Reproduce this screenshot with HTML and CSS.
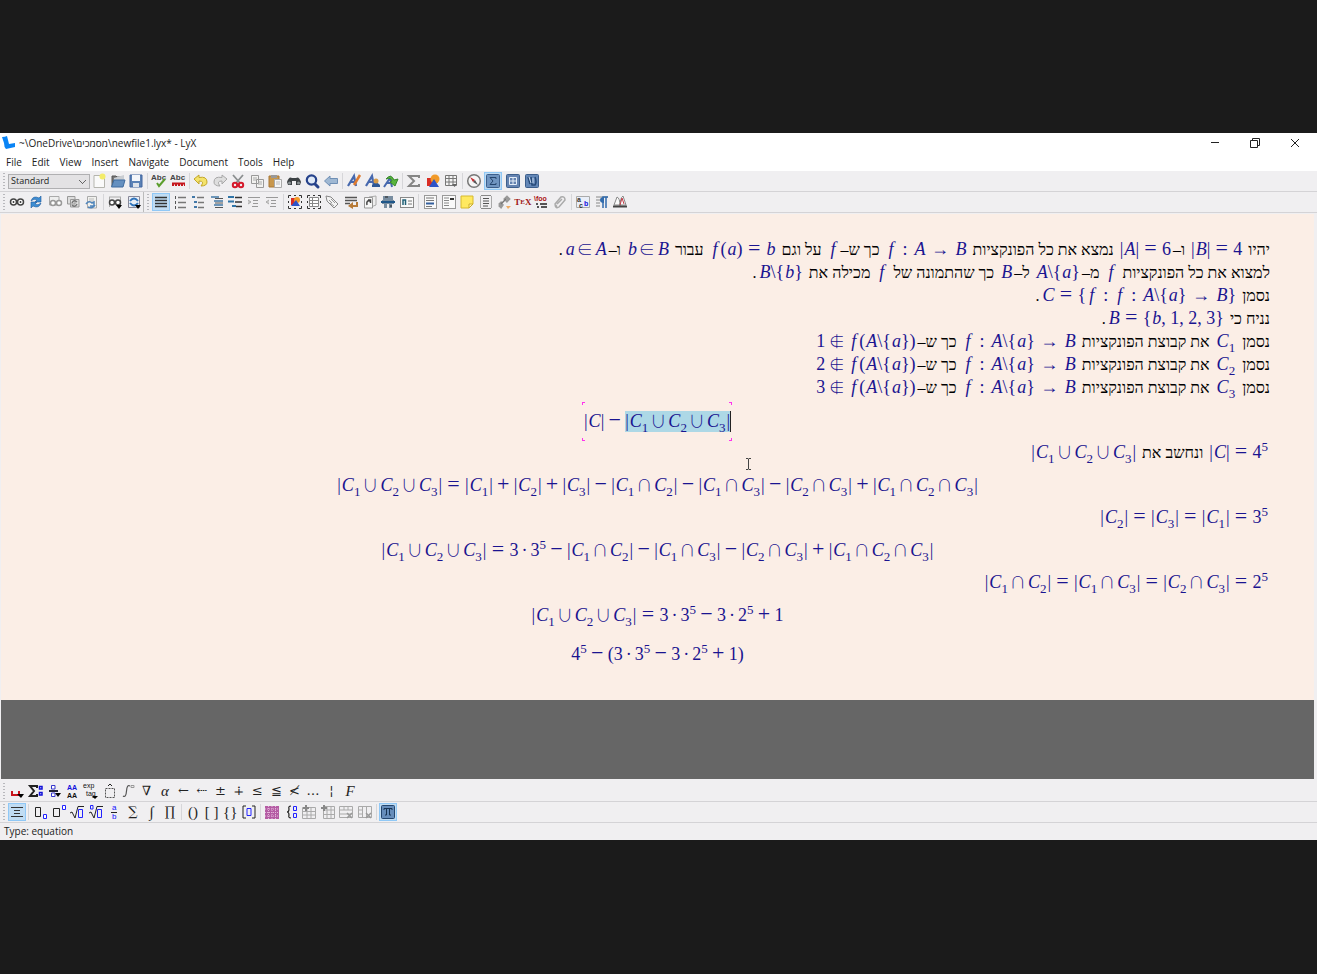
FILE: index.html
```html
<!DOCTYPE html>
<html lang="en">
<head>
<meta charset="utf-8">
<title>LyX</title>
<link rel="stylesheet" href="styles.css">
</head>
<body>
<div class="window">
<header class="titlebar">
<svg class="logo" width="14" height="14" viewBox="0 0 14 14"><path d="M0 1Q3 1 5 0L7 8L13 7V11L4 13Q2 11 2 7Z" fill="#0a84f5"/></svg>
<span class="caption">~\OneDrive\מסמכים\newfile1.lyx* - LyX</span>
<div class="controls">
<button aria-label="Minimize"><svg width="10" height="10" viewBox="0 0 10 10" class="thin"><path d="M1 4.500H9"/></svg></button>
<button aria-label="Restore"><svg width="10" height="10" viewBox="0 0 10 10" class="thin"><path d="M.5 2.500H7.500V9.500H.5ZM2.500 2.500V.5H9.500V7.500H7.500"/></svg></button>
<button aria-label="Close"><svg width="10" height="10" viewBox="0 0 10 10" class="thin"><path d="M1 1L9 9M9 1L1 9"/></svg></button>
</div>
</header>
<nav class="menu"><button>File</button><button>Edit</button><button>View</button><button>Insert</button><button>Navigate</button><button>Document</button><button>Tools</button><button>Help</button></nav>

<div class="bar">
<span class="handle"></span>
<select class="style-box" aria-label="Paragraph style"><option>Standard</option></select>
<div class="group n3">
<button aria-label="New"><svg viewBox="0 0 16 16"><path d="M3 2.500H13.500V14.500H3Z" fill="#fafafa" stroke="#b5b5ae"/><circle cx="11.500" cy="3.500" r="3" fill="#f3ec6a"/></svg></button>
<button aria-label="Open"><svg viewBox="0 0 16 16"><path d="M2 13V3H6L7 4H13V7" fill="#777" stroke="#555"/><path d="M4 5L14 2V8H4Z" fill="#c9cdd2"/><path d="M1.500 14L4 7H15L13 14Z" fill="#6590c0" stroke="#3e6b9f"/></svg></button>
<button aria-label="Save"><svg viewBox="0 0 16 16"><path d="M2 2H14V14H2Z" fill="#5b81b5" stroke="#4266a0"/><path d="M4 2H12V8H4Z" fill="#f4f6fa"/><path d="M5 10H11V14H5Z" fill="#dfe3ea"/></svg></button>
</div><i class="sep"></i>
<div class="group n2">
<button aria-label="Spellcheck"><svg viewBox="0 0 16 16"><text x="0" y="7" class="abc">Abc</text><path d="M6 10L8 13L14 6" fill="none" stroke="#5c9e2d" stroke-width="2"/></svg></button>
<button aria-label="Spellcheck continuously"><svg viewBox="0 0 16 16"><text x="0" y="7" class="abc">Abc</text><path d="M2 10.500H15" stroke="#c5161d" stroke-width="2"/><path d="M2 12H15" stroke="#c5161d" stroke-width="2" stroke-dasharray="2 1"/></svg></button>
</div><i class="sep"></i>
<div class="group n8">
<button aria-label="Undo"><svg viewBox="0 0 16 16"><path d="M1 6L6 2V4.500Q14 3 14 9Q14 13 8 13Q12 8 6 8V11Z" fill="#f4e36b" stroke="#c3a72a"/></svg></button>
<button aria-label="Redo"><svg viewBox="0 0 16 16"><path d="M15 6L10 2V4.500Q2 3 2 9Q2 13 8 13Q4 8 10 8V11Z" fill="#dedede" stroke="#a8a8a8"/></svg></button>
<button aria-label="Cut"><svg viewBox="0 0 16 16"><path d="M3 2L10 10M13 2L6 10" stroke="#8b8f90" stroke-width="1.800"/><circle cx="5" cy="12" r="2.200" fill="none" stroke="#d51a2c" stroke-width="2"/><circle cx="11" cy="12" r="2.200" fill="none" stroke="#d51a2c" stroke-width="2"/></svg></button>
<button aria-label="Copy"><svg viewBox="0 0 16 16"><path d="M2.500 2.500H9.500V10.500H2.500ZM7.500 6.500H14.500V14.500H7.500Z" fill="#f2f2f0" stroke="#999"/><path d="M4 5H8M4 7H7M9 9H13M9 11H13" stroke="#aaa"/></svg></button>
<button aria-label="Paste"><svg viewBox="0 0 16 16"><path d="M2 3H12V14H2Z" fill="#c8974c" stroke="#a87734"/><path d="M4 2H10V5H4Z" fill="#999"/><path d="M7.500 6.500H14.500V14.500H7.500Z" fill="#f6f6f6" stroke="#aaa"/><path d="M9 9H13M9 11H13" stroke="#bbb"/></svg></button>
<button aria-label="Find and replace"><svg viewBox="0 0 16 16"><path d="M1 9Q3 3 6 5H10Q13 3 15 9L14 12H10V8H6V12H2Z" fill="#3c4144"/><circle cx="3.500" cy="10" r="1.500" fill="#8d9496"/><circle cx="12.500" cy="10" r="1.500" fill="#8d9496"/></svg></button>
<button aria-label="Advanced find"><svg viewBox="0 0 16 16"><path d="M11 11L14 14" stroke="#26428b" stroke-width="3" stroke-linecap="round"/><circle cx="7.500" cy="7" r="4.700" fill="#dfe9f7" stroke="#26428b" stroke-width="2.200"/></svg></button>
<button aria-label="Navigate back"><svg viewBox="0 0 16 16"><path d="M1.500 8L7 3V5.500H14.500V10.500H7V13Z" fill="#9fb8d3" stroke="#6f8fb5"/></svg></button>
</div><i class="sep"></i>
<div class="group n3">
<button aria-label="Emphasis"><svg viewBox="0 0 16 16"><path d="M2 13L8 3L10 13M5 9H10" stroke="#4668ae" stroke-width="2.200" fill="none"/><path d="M8 12L14 2" stroke="#df7b2f" stroke-width="2.500"/></svg></button>
<button aria-label="Noun"><svg viewBox="0 0 16 16"><path d="M1 13L7 3L9 13M4 9H9" stroke="#4668ae" stroke-width="2.200" fill="none"/><path d="M7 14V12Q11 7 15 12V14Z" fill="#2d5896"/><circle cx="11" cy="8" r="2.500" fill="#d79b47"/></svg></button>
<button aria-label="Apply last"><svg viewBox="0 0 16 16"><path d="M1 14L7 5L9 14M4 10H9" stroke="#4668ae" stroke-width="2" fill="none"/><path d="M3 6Q8 0 11 7L15 6L12 13L7 9L9 8Q8 4 3 6Z" fill="#59b63d" stroke="#37872a"/></svg></button>
</div><i class="sep"></i>
<div class="group n3">
<button aria-label="Insert math"><svg viewBox="0 0 16 16"><path d="M13 5V3H3L8 8L3 13H13V11" fill="none" stroke="#858585" stroke-width="2"/></svg></button>
<button aria-label="Insert graphics"><svg viewBox="0 0 16 16"><path d="M2 5H9V13H2Z" fill="#d92c24"/><circle cx="10" cy="6" r="4.500" fill="#f19a28"/><path d="M4 14L9 6L14 14Z" fill="#2e54c7"/></svg></button>
<button aria-label="Insert table"><svg viewBox="0 0 16 16"><path d="M2.500 2.500H13.500V12.500H2.500ZM2 5.500H14M2 9H14M6 3V12M10 3V12" fill="#f4f4f4" stroke="#777"/><path d="M9 11H14L11.500 14Z" fill="#666"/></svg></button>
</div><i class="sep"></i>
<div class="group n4">
<button aria-label="Outline"><svg viewBox="0 0 16 16"><circle cx="8" cy="8" r="6.300" fill="#f5f5f5" stroke="#777" stroke-width="1.500"/><path d="M4 4L9 7L7 9Z" fill="#c42c30"/><path d="M12 12L7 9L9 7Z" fill="#555"/></svg></button>
<button class="on" aria-label="Math toolbar"><svg viewBox="0 0 16 16"><rect x="1.500" y="1.500" width="13" height="13" rx="1" fill="#6f94c0" stroke="#3d5f8c"/><path d="M11 6V4.500H5L8 8L5 11.500H11V10" fill="none" stroke="#24446d"/></svg></button>
<button aria-label="Table toolbar"><svg viewBox="0 0 16 16"><rect x="1.500" y="1.500" width="13" height="13" rx="1" fill="#6482b0" stroke="#3d5f8c"/><path d="M4.500 4.500H11.500V11.500H4.500ZM4 8H12M8 4V12" fill="none" stroke="#e4edf7"/></svg></button>
<button aria-label="Review toolbar"><svg viewBox="0 0 16 16"><rect x="1.500" y="1.500" width="13" height="13" rx="1" fill="#6487b6" stroke="#3d5f8c"/><path d="M4 4L6 11M7 4L8 12H11Q13 9 11 4" fill="none" stroke="#274a78" stroke-width="1.500"/><path d="M5 4L7 10M9 5V10" stroke="#c5d6ea"/></svg></button>
</div>
</div>

<div class="bar">
<span class="handle"></span>
<div class="group n5">
<button aria-label="View"><svg viewBox="0 0 16 16"><g class="specs"><circle cx="4.500" cy="8" r="3"/><circle cx="11.500" cy="8" r="3"/><path d="M4.500 7V9M11.500 7V9"/></g></svg></button>
<button aria-label="Update"><svg viewBox="0 0 16 16"><path d="M3 7Q5 1 11 4L13 2V8H7L9 6Q6 4 3 7ZM13 9Q11 15 5 12L3 14V8H9L7 10Q10 12 13 9Z" fill="#3d8ed3" stroke="#215d9e" stroke-width=".6"/></svg></button>
<button aria-label="View master"><svg viewBox="0 0 16 16"><path d="M2.500 2.500H12V11H2.500Z" fill="#eee" stroke="#aaa"/><g class="specs pale"><circle cx="6" cy="9" r="2.500"/><circle cx="12" cy="9" r="2.500"/></g></svg></button>
<button aria-label="Update master"><svg viewBox="0 0 16 16"><path d="M2.500 2.500H10V10H2.500ZM5.500 5.500H14V13H5.500Z" fill="#ddd" stroke="#999"/><path d="M7 9Q9 5 12 8M12 10Q10 14 7 11" stroke="#777" stroke-width="1.500" fill="none"/></svg></button>
<button aria-label="Synchronize"><svg viewBox="0 0 16 16"><path d="M3.500 2.500H12.500V14H3.500Z" fill="#f1f1ee" stroke="#aaa"/><path d="M5 5H10M5 7H10" stroke="#bbb"/><path d="M2 10Q5 6 8 9L10 8V12H6M11 11Q9 15 4 13" stroke="#4f84bb" stroke-width="1.500" fill="none"/></svg></button>
</div><i class="sep"></i>
<div class="group n2">
<button aria-label="View other formats"><svg viewBox="0 0 16 16"><path d="M2.500 3V13M13.500 3V13M2 3H14" stroke="#aaa"/><g class="specs"><circle cx="5" cy="8.500" r="2.500"/><circle cx="11" cy="8.500" r="2.500"/></g><path d="M9 11H15L12 15Z"/></svg></button>
<button aria-label="Update other formats"><svg viewBox="0 0 16 16"><path d="M2.500 2.500H13.500V13.500H2.500Z" fill="#e8eef6" stroke="#889"/><path d="M4 7Q8 2 12 7M12 9Q8 14 4 9" stroke="#2f73bb" stroke-width="2" fill="none"/><path d="M9 11H15L12 15Z"/></svg></button>
</div>
<span class="bar-end"></span><span class="handle"></span>
<div class="group n7">
<button class="on" aria-label="Default"><svg viewBox="0 0 16 16"><path d="M2 3.500H14M2 6.500H14M2 9.500H14M2 12.500H14" stroke="#333" stroke-width="1.500"/></svg></button>
<button aria-label="Numbered list"><svg viewBox="0 0 16 16"><path d="M3.500 2V5M3.500 7V10M3.500 12V15" stroke="#555"/><path d="M6 3.500H14M6 8.500H14M6 13.500H14" stroke="#777" stroke-width="1.500"/></svg></button>
<button aria-label="Itemized list"><svg viewBox="0 0 16 16"><path d="M2 3H5M4 8H7M4 13H7" stroke="#4278a8" stroke-width="2"/><path d="M7 3.500H14M8 8.500H14M8 13.500H14" stroke="#777" stroke-width="1.500"/></svg></button>
<button aria-label="List"><svg viewBox="0 0 16 16"><path d="M2 3H10M5 7H14M5 11H14" stroke="#417aa6" stroke-width="1.500"/><path d="M6 4.500H14M6 9H14M6 13.500H14" stroke="#555"/></svg></button>
<button aria-label="Description"><svg viewBox="0 0 16 16"><path d="M1 3H7M1 7.500H7M5 12H9" stroke="#2f74a7" stroke-width="2"/><path d="M8 3.500H15M8 8H15M9 12.500H15" stroke="#333" stroke-width="1.500"/></svg></button>
<button aria-label="Increase depth"><svg viewBox="0 0 16 16"><path d="M2 3.500H14M7 6.500H12M7 9.500H12M6 12.500H12" stroke="#999"/><path d="M2 6L5 8L2 10" fill="#ccc" stroke="#aaa"/></svg></button>
<button aria-label="Decrease depth"><svg viewBox="0 0 16 16"><path d="M2 3.500H14M7 6.500H12M7 9.500H12M6 12.500H12" stroke="#999"/><path d="M5 6L2 8L5 10" fill="#ccc" stroke="#aaa"/></svg></button>
</div><i class="sep"></i>
<div class="group n7 wide">
<button aria-label="Float figure"><svg viewBox="0 0 16 16"><path d="M1.500 4V1.500H4M12 1.500H14.500V4M14.500 12V14.500H12M4 14.500H1.500V12M7 1.500H9M7 14.500H9M1.500 7V9M14.500 7V9" fill="none" stroke="#333"/><path d="M4 4H9V11H4Z" fill="#d92c24"/><circle cx="10" cy="6" r="3" fill="#f19a28"/><path d="M4 12L9 6L13 12Z" fill="#2e54c7"/></svg></button>
<button aria-label="Float table"><svg viewBox="0 0 16 16"><path d="M1.500 4V1.500H4M12 1.500H14.500V4M14.500 12V14.500H12M4 14.500H1.500V12M7 1.500H9M7 14.500H9M1.500 7V9M14.500 7V9" fill="none" stroke="#333"/><path d="M3.500 3.500H12.500V12.500H3.500ZM3 6.500H13M3 9.500H13M6.500 3V13" fill="#fff" stroke="#888"/></svg></button>
<button aria-label="Label"><svg viewBox="0 0 16 16"><path d="M2 2L7 3L14 10L10 14L3 7Z" fill="#f3f3f3" stroke="#888"/><path d="M5 6L8 9M7 5L11 9M6 9L10 12" stroke="#999"/></svg></button>
<button aria-label="Cross-reference"><svg viewBox="0 0 16 16"><path d="M2 3.500H14M2 6.500H14M2 9.500H7" stroke="#555" stroke-width="1.500"/><path d="M14 8V12H9" fill="none" stroke="#b87b38" stroke-width="2"/><path d="M10 8V15L5 12Z" fill="#b87b38"/></svg></button>
<button aria-label="Citation"><svg viewBox="0 0 16 16"><path d="M7 3L14 2V11L9 13" fill="#eee" stroke="#aaa"/><path d="M2.500 3.500H10.500V14H2.500Z" fill="#f7f7f7" stroke="#999"/><path d="M5 11Q4 6 8 7M6 6H8.500V9" fill="none" stroke="#444" stroke-width="1.500"/></svg></button>
<button aria-label="Index"><svg viewBox="0 0 16 16"><path d="M3 2H13V6H3ZM2 6H14V10H2ZM4 10H7V14H4ZM9 10H12V14H9Z" fill="#788da0"/><path d="M1 8H15" stroke="#1f5689" stroke-width="2"/><path d="M5 3H8M10 12H12" stroke="#222"/></svg></button>
<button aria-label="Nomenclature"><svg viewBox="0 0 16 16"><rect x="1.500" y="3.500" width="13" height="10" fill="#f9f9f9" stroke="#888"/><path d="M4 11V6H6.500V11" fill="none" stroke="#206077" stroke-width="1.500"/><path d="M9 7H13M9 10H13" stroke="#777"/></svg></button>
</div><i class="sep"></i>
<div class="group n8">
<button aria-label="Footnote"><svg viewBox="0 0 16 16"><rect x="2.500" y="1.500" width="12" height="13" fill="#f9f9f9" stroke="#999"/><path d="M4 4H12M4 6.500H12M4 12.500H10" stroke="#777"/><path d="M4 9.500H12" stroke="#335f9e" stroke-width="2"/></svg></button>
<button aria-label="Margin note"><svg viewBox="0 0 16 16"><rect x="1.500" y="1.500" width="13" height="13" fill="#f9f9f9" stroke="#999"/><path d="M3 4H8M3 6.500H8M3 9H8M3 11.500H8" stroke="#888"/><path d="M9 5H13" stroke="#333" stroke-width="2"/></svg></button>
<button aria-label="Note"><svg viewBox="0 0 16 16"><path d="M2 2H14V10L10 14H2Z" fill="#ffe960" stroke="#d6b92f"/><path d="M14 10H10V14Z" fill="#fff7b5" stroke="#ccad2a"/></svg></button>
<button aria-label="Box"><svg viewBox="0 0 16 16"><path d="M3 1.500H13M3 14.500H13" stroke="#888"/><path d="M2.500 2V14M13.500 2V14" stroke="#aaa"/><path d="M5 4.500H11M5 7H11M5 9.500H11M5 12H10" stroke="#555"/></svg></button>
<button aria-label="Hyperlink"><svg viewBox="0 0 16 16"><path d="M3 11L6 8M8 6L11 3L13 5L10 8M7 10L5 13L3 11" stroke="#999" stroke-width="2.500" fill="none"/><path d="M5 10L10 5" stroke="#777" stroke-width="1.500"/><path d="M10 12H15L12 15Z" fill="#f0ad65"/></svg></button>
<button class="tex" aria-label="TeX code">T<sub>E</sub>X</button>
<button aria-label="Math macro"><svg viewBox="0 0 16 16"><text x="1" y="7" class="foo">\foo</text><path d="M3 10H5M7 10H14M4 13H6M8 13H14" stroke="#222" stroke-width="1.500"/></svg></button>
<button aria-label="Include file"><svg viewBox="0 0 16 16"><path d="M5 13L3 10L9 3Q13 2 13 6L7 13Q4 15 3 11M5 10L10 5" fill="none" stroke="#aaa" stroke-width="1.500"/></svg></button>
</div><i class="sep"></i>
<div class="group n3">
<button aria-label="Text style"><svg viewBox="0 0 16 16"><path d="M1.500 2.500H14.500V13.500H1.500Z" fill="#e9eef8" stroke="#aaa"/><text x="2" y="8" class="small-a">a</text><text x="4" y="14" class="small-a">c</text><text x="9" y="12" class="small-a blue">b</text></svg></button>
<button aria-label="Paragraph settings"><svg viewBox="0 0 16 16"><path d="M2 3H14M2 6H6M2 9H6M2 12H6" stroke="#888"/><path d="M9 14V3H14M12 3V14" stroke="#316bad" stroke-width="1.500" fill="none"/><path d="M10 3Q6 3 6 6Q6 9 10 9Z" fill="#316bad"/></svg></button>
<button aria-label="Thesaurus"><svg viewBox="0 0 16 16"><path d="M2 11L5 3Q8 4 8 12Q8 4 11 2L14 11Z" fill="#fafafa" stroke="#888"/><path d="M1 12.500H15" stroke="#444" stroke-width="2"/><path d="M8 11L10 4L12 10" stroke="#c33d49" fill="none"/></svg></button>
</div>
</div>

<main class="editor">
<article class="doc" dir="rtl" lang="he">
<p>יהיו <bdi dir="ltr">|<i>B</i>|<b class="rel">=</b>4</bdi> ו–<bdi dir="ltr">|<i>A</i>|<b class="rel">=</b>6</bdi> נמצא את כל הפונקציות <bdi dir="ltr"><i class="f">f</i><b class="col">:</b><i>A</i><b class="arr">→</b><i>B</i></bdi> כך ש–<bdi dir="ltr"><i class="f">f</i></bdi> על וגם <bdi dir="ltr"><i class="f">f</i>(<i>a</i>)<b class="rel">=</b><i>b</i></bdi> עבור <bdi dir="ltr"><i>b</i><b class="el">∈</b><i>B</i></bdi> ו–<bdi dir="ltr"><i>a</i><b class="el">∈</b><i>A</i></bdi>.</p>
<p>למצוא את כל הפונקציות <bdi dir="ltr"><i class="f">f</i></bdi> מ–<bdi dir="ltr"><i>A</i>\{<i>a</i>}</bdi> ל–<bdi dir="ltr"><i>B</i></bdi> כך שהתמונה של <bdi dir="ltr"><i class="f">f</i></bdi> מכילה את <bdi dir="ltr"><i>B</i>\{<i>b</i>}</bdi>.</p>
<p>נסמן <bdi dir="ltr"><i>C</i><b class="rel">=</b>{<i class="f">f</i><b class="col">:</b><i class="f">f</i><b class="col">:</b><i>A</i>\{<i>a</i>}<b class="arr">→</b><i>B</i>}</bdi>.</p>
<p>נניח כי <bdi dir="ltr"><i>B</i><b class="rel">=</b>{<i>b</i>, 1, 2, 3}</bdi>.</p>
<p>נסמן <bdi dir="ltr"><i>C</i><sub>1</sub></bdi> את קבוצת הפונקציות <bdi dir="ltr"><i class="f">f</i><b class="col">:</b><i>A</i>\{<i>a</i>}<b class="arr">→</b><i>B</i></bdi> כך ש–<bdi dir="ltr">1<b class="el out">∉</b><i class="f">f</i>(<i>A</i>\{<i>a</i>})</bdi></p>
<p>נסמן <bdi dir="ltr"><i>C</i><sub>2</sub></bdi> את קבוצת הפונקציות <bdi dir="ltr"><i class="f">f</i><b class="col">:</b><i>A</i>\{<i>a</i>}<b class="arr">→</b><i>B</i></bdi> כך ש–<bdi dir="ltr">2<b class="el out">∉</b><i class="f">f</i>(<i>A</i>\{<i>a</i>})</bdi></p>
<p>נסמן <bdi dir="ltr"><i>C</i><sub>3</sub></bdi> את קבוצת הפונקציות <bdi dir="ltr"><i class="f">f</i><b class="col">:</b><i>A</i>\{<i>a</i>}<b class="arr">→</b><i>B</i></bdi> כך ש–<bdi dir="ltr">3<b class="el out">∉</b><i class="f">f</i>(<i>A</i>\{<i>a</i>})</bdi></p>
<div class="display" dir="ltr"><div class="active"><span>|<i>C</i>|<b class="bin">−</b></span><span class="selected">|<i>C</i><sub>1</sub><b class="cup">∪</b><i>C</i><sub>2</sub><b class="cup">∪</b><i>C</i><sub>3</sub>|</span><u class="c1"></u><u class="c2"></u><u class="c3"></u><u class="c4"></u>
<svg class="ibeam" width="7" height="12" viewBox="0 0 7 12"><path d="M1 .5H3L3.500 1L4 .5H6M3.500 1V11M1 11.500H3L3.500 11L4 11.500H6" fill="none" stroke="#444"/></svg></div></div>
<p><bdi dir="ltr">|<i>C</i>|<b class="rel">=</b>4<sup>5</sup></bdi> ונחשב את <bdi dir="ltr">|<i>C</i><sub>1</sub><b class="cup">∪</b><i>C</i><sub>2</sub><b class="cup">∪</b><i>C</i><sub>3</sub>|</bdi></p>
<div class="display" dir="ltr">|<i>C</i><sub>1</sub><b class="cup">∪</b><i>C</i><sub>2</sub><b class="cup">∪</b><i>C</i><sub>3</sub>|<b class="rel">=</b>|<i>C</i><sub>1</sub>|<b class="bin">+</b>|<i>C</i><sub>2</sub>|<b class="bin">+</b>|<i>C</i><sub>3</sub>|<b class="bin">−</b>|<i>C</i><sub>1</sub><b class="cup">∩</b><i>C</i><sub>2</sub>|<b class="bin">−</b>|<i>C</i><sub>1</sub><b class="cup">∩</b><i>C</i><sub>3</sub>|<b class="bin">−</b>|<i>C</i><sub>2</sub><b class="cup">∩</b><i>C</i><sub>3</sub>|<b class="bin">+</b>|<i>C</i><sub>1</sub><b class="cup">∩</b><i>C</i><sub>2</sub><b class="cup">∩</b><i>C</i><sub>3</sub>|</div>
<p><bdi dir="ltr">|<i>C</i><sub>2</sub>|<b class="rel">=</b>|<i>C</i><sub>3</sub>|<b class="rel">=</b>|<i>C</i><sub>1</sub>|<b class="rel">=</b>3<sup>5</sup></bdi></p>
<div class="display" dir="ltr">|<i>C</i><sub>1</sub><b class="cup">∪</b><i>C</i><sub>2</sub><b class="cup">∪</b><i>C</i><sub>3</sub>|<b class="rel">=</b>3<b class="dot">·</b>3<sup>5</sup><b class="bin">−</b>|<i>C</i><sub>1</sub><b class="cup">∩</b><i>C</i><sub>2</sub>|<b class="bin">−</b>|<i>C</i><sub>1</sub><b class="cup">∩</b><i>C</i><sub>3</sub>|<b class="bin">−</b>|<i>C</i><sub>2</sub><b class="cup">∩</b><i>C</i><sub>3</sub>|<b class="bin">+</b>|<i>C</i><sub>1</sub><b class="cup">∩</b><i>C</i><sub>2</sub><b class="cup">∩</b><i>C</i><sub>3</sub>|</div>
<p><bdi dir="ltr">|<i>C</i><sub>1</sub><b class="cup">∩</b><i>C</i><sub>2</sub>|<b class="rel">=</b>|<i>C</i><sub>1</sub><b class="cup">∩</b><i>C</i><sub>3</sub>|<b class="rel">=</b>|<i>C</i><sub>2</sub><b class="cup">∩</b><i>C</i><sub>3</sub>|<b class="rel">=</b>2<sup>5</sup></bdi></p>
<div class="display" dir="ltr">|<i>C</i><sub>1</sub><b class="cup">∪</b><i>C</i><sub>2</sub><b class="cup">∪</b><i>C</i><sub>3</sub>|<b class="rel">=</b>3<b class="dot">·</b>3<sup>5</sup><b class="bin">−</b>3<b class="dot">·</b>2<sup>5</sup><b class="bin">+</b>1</div>
<div class="display last" dir="ltr">4<sup>5</sup><b class="bin">−</b>(3<b class="dot">·</b>3<sup>5</sup><b class="bin">−</b>3<b class="dot">·</b>2<sup>5</sup><b class="bin">+</b>1)</div>
</article>
<div class="below"></div>
</main>

<div class="bar">
<span class="handle"></span>
<div class="group n19">
<button aria-label="Spacing"><svg viewBox="0 0 16 16"><path d="M3 8V12H10V8" fill="none" stroke="#c8141c" stroke-width="2"/><path d="M8 11H15L12 15Z"/></svg></button>
<button aria-label="Operators"><svg viewBox="0 0 16 16"><path d="M9 5V3H2L6 8L2 13H9V11" fill="none" stroke="#222" stroke-width="2"/><path d="M11.500 3.500H14V6H11.500ZM11.500 9.500H14V12H11.500Z" fill="#fff" stroke="#1111d8" stroke-width="1.500"/></svg></button>
<button aria-label="Fractions"><svg viewBox="0 0 16 16"><path d="M5.500 2.500H9V6H5.500ZM5.500 10H9V13.500H5.500Z" fill="#fff" stroke="#3535cc"/><path d="M3 8H12" stroke="#223" stroke-width="2"/><path d="M9 10H15L12 14Z"/></svg></button>
<button aria-label="Fonts"><svg viewBox="0 0 16 16"><text x="2" y="7" class="aa blue">AA</text><text x="2" y="15" class="aa">AA</text></svg></button>
<button aria-label="Functions"><svg viewBox="0 0 16 16"><text x="0" y="5" class="exp">exp</text><text x="3" y="13" class="exp">tag</text><path d="M9 13H15L12 16Z"/></svg></button>
<button aria-label="Frame decorations"><svg viewBox="0 0 16 16"><path d="M3.500 5.500H12.500V14.500H3.500Z" fill="none" stroke="#555" stroke-dasharray="2 1"/><path d="M6 3L8 1L10 3" fill="none" stroke="#222"/></svg></button>
<button aria-label="Big operators"><svg viewBox="0 0 16 16"><path d="M3 13Q6 15 6.500 8Q7 1 10 3" fill="none" stroke="#555" stroke-width="1.200"/><path d="M11 2.500H14V4.500H11Z" fill="none" stroke="#999"/></svg></button>
<button class="glyph">∇</button><button class="glyph it">α</button><button class="glyph">←</button><button class="glyph">⇠</button><button class="glyph">±</button><button class="glyph">∔</button><button class="glyph">≤</button><button class="glyph">≦</button><button class="glyph">≮</button><button class="glyph">…</button><button class="glyph">¦</button><button class="glyph it">F</button>
</div>
</div>
<div class="bar">
<span class="handle"></span>
<div class="group"><button class="on" aria-label="Display formula"><svg viewBox="0 0 16 16"><path d="M2 3.500H14M5 6.500H11M5 9.500H11M2 12.500H14" stroke="#333"/></svg></button></div><i class="sep"></i>
<div class="group n8">
<button aria-label="Subscript"><svg viewBox="0 0 16 16"><path d="M3.500 3.500H8.500V12.500H3.500Z" fill="none" stroke="#222"/><path d="M11.500 10.500H14.500V14.500H11.500Z" fill="#fff" stroke="#22f"/></svg></button>
<button aria-label="Superscript"><svg viewBox="0 0 16 16"><path d="M2.500 4.500H8.500V12.500H2.500Z" fill="none" stroke="#222"/><path d="M11.500 1.500H14.500V5.500H11.500Z" fill="#fff" stroke="#22f"/></svg></button>
<button aria-label="Square root"><svg viewBox="0 0 16 16"><path d="M1 9L3 8L6 14L9 2.500H15" fill="none" stroke="#222"/><path d="M9.500 5.500H13.500V13.500H9.500Z" fill="none" stroke="#22f"/></svg></button>
<button aria-label="Root"><svg viewBox="0 0 16 16"><path d="M1 9L3 8L6 14L9 2.500H15" fill="none" stroke="#222"/><path d="M9.500 5.500H13.500V13.500H9.500ZM2.500 1.500H5V5H2.500Z" fill="none" stroke="#22f"/></svg></button>
<button aria-label="Fraction"><svg viewBox="0 0 16 16"><text x="6" y="6" class="frac">a</text><path d="M5 8.500H11" stroke="#222"/><text x="6" y="15" class="frac">b</text></svg></button>
<button class="glyph">∑</button><button class="glyph it">∫</button><button class="glyph">∏</button>
</div><i class="sep"></i>
<div class="group n4 tight">
<button class="glyph big">()</button><button class="glyph big">[ ]</button><button class="glyph big">{}</button>
<button aria-label="Delimiters"><svg viewBox="0 0 16 16"><path d="M5 2H2V14H5M11 2H14V14H11" fill="none" stroke="#222"/><path d="M6 4.500H10V11.500H6Z" fill="none" stroke="#22f"/></svg></button>
</div><i class="sep"></i>
<div class="group n6">
<button aria-label="Matrix"><svg viewBox="0 0 16 16"><path d="M1 2H15V15H1Z" fill="#b45ca4"/><path d="M1 5H15M1 8.500H15M1 12H15M4.500 2V15M8 2V15M11.500 2V15" stroke="#e3b5da" stroke-dasharray="1 1"/></svg></button>
<button aria-label="Cases"><svg viewBox="0 0 16 16"><path d="M8 2Q5 2 6 5Q6 8 4 8Q6 8 6 11Q5 14 8 14" fill="none" stroke="#222" stroke-width="1.200"/><path d="M10.500 2.500H13.500V6.500H10.500ZM10.500 9.500H13.500V13.500H10.500Z" fill="none" stroke="#22f"/></svg></button>
<button aria-label="Add row"><svg viewBox="0 0 16 16"><path class="grid" d="M1.500 3.500H14.500V14.500H1.500ZM1 7.500H15M1 11H15M6 3V15M10 3V15"/><path d="M5 1V7M2 4H8" stroke="#888" stroke-width="2"/></svg></button>
<button aria-label="Add column"><svg viewBox="0 0 16 16"><path class="grid" d="M3.500 2.500H14.500V14.500H3.500ZM3 6H15M3 10.500H15M7 2V15M11 2V15"/><path d="M4 1V7M1 4H7" stroke="#888" stroke-width="2"/></svg></button>
<button aria-label="Delete row"><svg viewBox="0 0 16 16"><path class="grid" d="M1.500 2.500H14.500V13.500H1.500ZM1 6H15M1 10H15M6 2V6M10 2V6"/><path d="M9 9L14 14M14 9L9 14" stroke="#999" stroke-width="1.500"/></svg></button>
<button aria-label="Delete column"><svg viewBox="0 0 16 16"><path class="grid" d="M1.500 2.500H14.500V13.500H1.500ZM1 6H5M1 10H5M5.500 2V14M9.500 2V14"/><path d="M9 9L14 14M14 9L9 14" stroke="#999" stroke-width="1.500"/></svg></button>
</div><i class="sep"></i>
<div class="group"><button class="on" aria-label="Math panels"><svg viewBox="0 0 16 16"><rect x="1.500" y="1.500" width="13" height="13" rx="1" fill="#668dbb" stroke="#24456e"/><path d="M4 6V4.500H12V6M6.500 5V11H5M9.500 5V11H11" fill="none" stroke="#173454"/></svg></button></div>
</div>
<footer class="status">Type: equation</footer>
</div>
</body>
</html>
```
FILE: styles.css
```css
* { box-sizing: border-box; }
body {
  margin: 0;
  min-height: 100vh;
  padding: 133px 0 134px;
  display: flex;
  flex-direction: column;
  background: #1b1b1b;
  font-family: "Open Sans", "Liberation Sans", sans-serif;
  font-size: 10px;
  color: #222;
}
button { border: 0; padding: 0; margin: 0; background: none; font: inherit; color: inherit; }
.window { flex: 1; display: flex; flex-direction: column; background: #f0eff1; }

.titlebar { display: flex; align-items: center; height: 20px; padding-left: 2px; gap: 3px; background: #fff; }
.caption { white-space: nowrap; }
.controls { display: flex; margin-left: auto; padding-right: 2px; }
.controls button { width: 40px; height: 20px; display: flex; align-items: center; justify-content: center; }
.thin { fill: none; stroke: #222; stroke-width: 1; }

.menu { display: flex; gap: 10px; height: 18px; padding: 0 6px; align-items: center; background: #fff; }

.bar { display: flex; align-items: center; height: 21px; border-bottom: 1px solid #d4d3d6; }
.handle { width: 2px; height: 16px; margin: 0 3px; background: repeating-linear-gradient(#b8b8bc 0 1px, transparent 1px 3px); }
.style-box {
  width: 82px; height: 15px; padding: 0 2px; margin: 0;
  appearance: none; border: 1px solid #b0b0b2; border-radius: 0;
  background: #e3e2e4 no-repeat;
  background-image: linear-gradient(45deg, transparent 44%, #666 44% 58%, transparent 58%), linear-gradient(-45deg, transparent 44%, #666 44% 58%, transparent 58%);
  background-size: 4px 4px;
  background-position: 70px 5px, 73px 5px;
  font: 9px/12px "Open Sans", sans-serif; color: #222;
}
.group { display: flex; justify-content: space-between; }
.group button { width: 18px; height: 18px; display: flex; align-items: center; justify-content: center; flex: none; }
.group svg { width: 16px; height: 16px; display: block; overflow: visible; }
.group .on { background: #c0dcf3; outline: 1px solid #90c8f6; outline-offset: -1px; }
.n2 { width: 37px; }
.n3 { width: 55px; }
.n4 { width: 76px; }
.n4.tight { width: 74px; }
.n5 { width: 93px; }
.n6 { width: 111px; }
.n7 { width: 129px; }
.n7.wide { width: 130px; }
.n8 { width: 148px; }
.n19 { width: 351px; }
.sep { width: 1px; height: 16px; margin: 0 2px; background: #d6d6d9; }
.bar-end { width: 1px; height: 20px; background: #bbb; }
.abc { font: bold 8px "Liberation Sans", sans-serif; fill: #444; }
.foo { font: bold 7px "Liberation Sans", sans-serif; fill: #a11; }
.small-a { font: bold 7px "Liberation Sans", sans-serif; fill: #333; }
.aa { font: bold 7px "Liberation Sans", sans-serif; fill: #111; }
.exp { font: 7px "Liberation Sans", sans-serif; fill: #111; }
.frac { font: 8px "Liberation Sans", sans-serif; fill: #11f; }
.group .blue { fill: #11d; }
.specs { fill: #fff; stroke: #444; stroke-width: 1.500; }
.specs.pale { stroke: #999; }
.grid { fill: none; stroke: #aaa; }
.group .tex { font: bold 9px "Liberation Serif", serif; color: #a01818; }
.tex sub { font-size: 7px; }
.group .glyph { font: 13px/18px "DejaVu Serif", serif; overflow: hidden; }
.group .it { font-family: "Liberation Serif", serif; font-style: italic; font-size: 15px; }
.group .big { font: 15px/16px "Liberation Serif", serif; }

.editor { flex: 1; display: flex; flex-direction: column; margin: 1px 3px 2px 1px; }
.doc {
  padding: 24px 44px 28px;
  background: #fbeee6;
  font: 16px/23px "Liberation Serif", "Times New Roman", serif;
  color: #000;
}
.doc p { margin: 0; height: 23px; white-space: nowrap; }
.doc bdi, .display { font-size: 18px; color: #1a1490; }
.doc bdi { line-height: 20px; margin: 0 2px; }
.doc sub, .doc sup { font-size: 13px; line-height: 0; }
.doc sub { vertical-align: -5px; padding-right: 1px; }
.doc sup { vertical-align: 7px; }
.doc i { padding-left: 1px; }
.doc i.f { padding: 0 3px; }
.doc b { display: inline-block; text-align: center; font-weight: normal; font-size: 22px; line-height: 0; }
.doc .rel { width: 23px; }
.doc .bin { width: 21px; }
.doc .cup { width: 18px; font-family: "Noto Sans CJK JP", sans-serif; font-size: 16px; font-weight: 300; }
.doc .el { width: 20px; font-family: "Noto Sans CJK JP", sans-serif; font-size: 16px; font-weight: 300; }
.doc .el.out { width: 23px; }
.doc .dot { width: 12px; font-size: 18px; }
.doc .col { width: 17px; font-size: 18px; }
.doc .arr { width: 29px; font-size: 18px; }
.display { height: 42px; line-height: 42px; text-align: center; white-space: nowrap; }
.display.last { height: 36px; line-height: 36px; }
.active { position: relative; display: inline-block; line-height: 21px; vertical-align: middle; padding: 0 1px; }
.selected { display: inline-block; background: #add8e6; border-right: 1px solid #222; }
.active u { position: absolute; width: 3px; height: 3px; border: 0 solid #f3e; }
.active .c1 { left: -1px; top: -9px; border-width: 1px 0 0 1px; }
.active .c2 { right: 0; top: -9px; border-width: 1px 1px 0 0; }
.active .c3 { left: -1px; bottom: -9px; border-width: 0 0 1px 1px; }
.active .c4 { right: 0; bottom: -9px; border-width: 0 1px 1px 0; }
.ibeam { position: absolute; right: -20px; top: 47px; }
.below { flex: 1; background: #666; }

.status { height: 17px; padding-left: 4px; line-height: 17px; }
```
